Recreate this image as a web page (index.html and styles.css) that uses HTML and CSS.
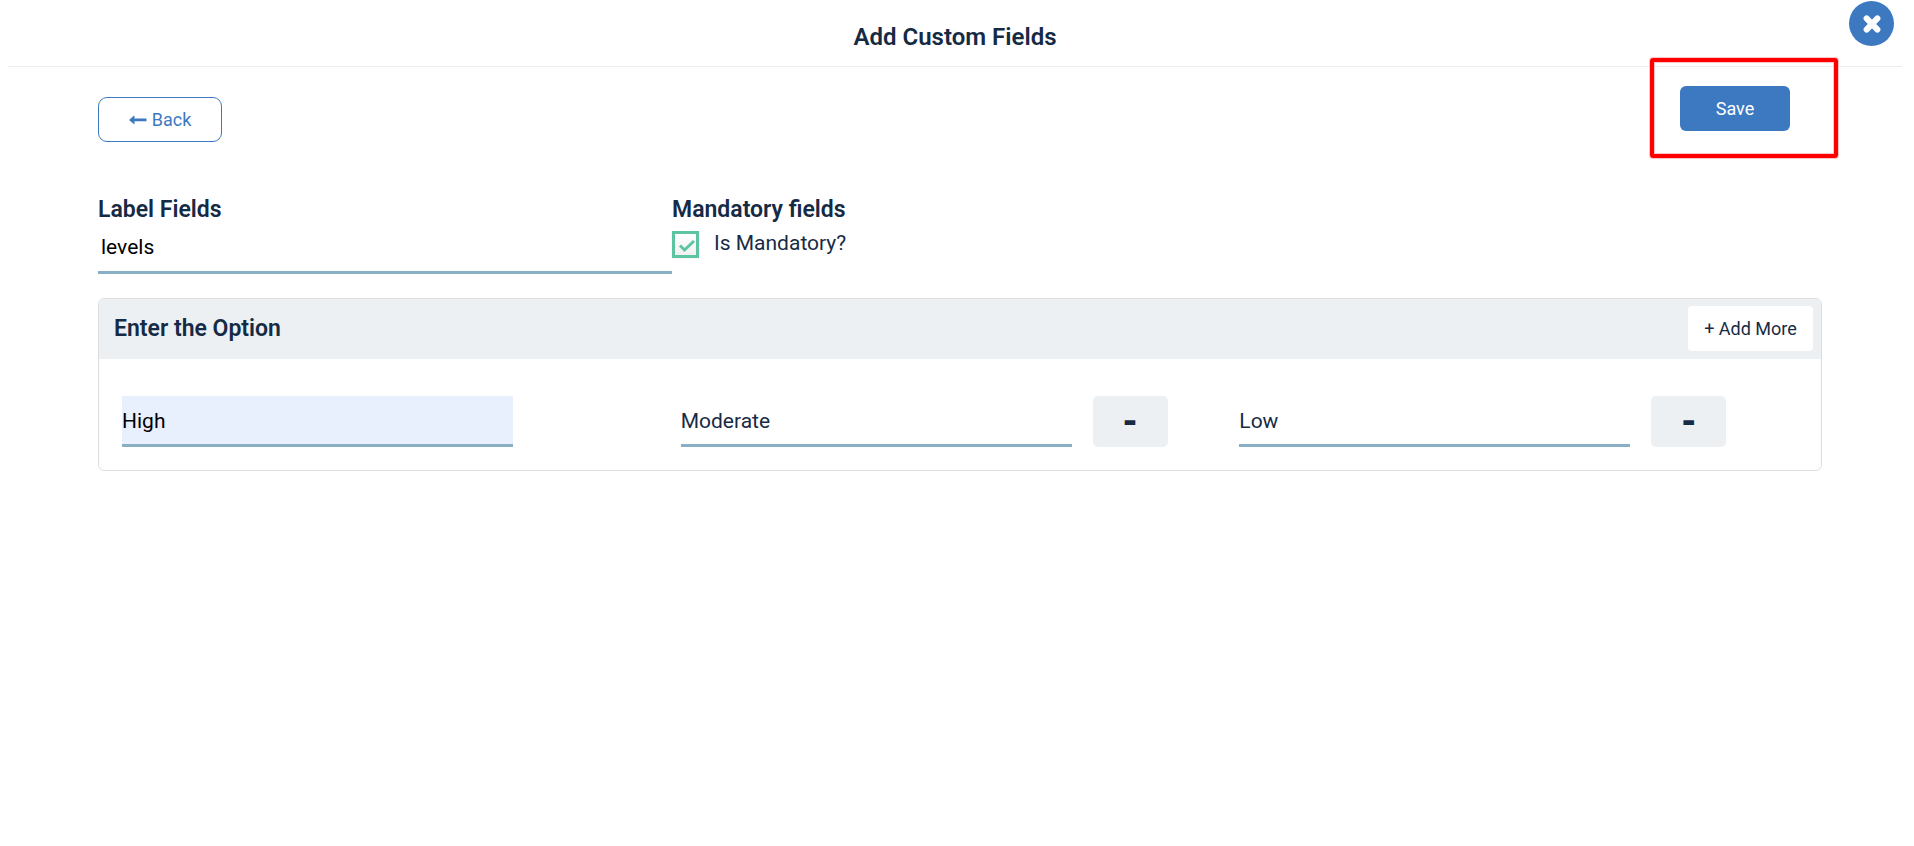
FILE: index.html
```html
<!DOCTYPE html>
<html lang="en">
<head>
<meta charset="utf-8">
<title>Add Custom Fields</title>
<link rel="stylesheet" href="styles.css">
</head>
<body>
<header class="dialog-header">
  <h1 class="dialog-title">Add Custom Fields</h1>
  <button class="close" type="button" aria-label="Close">
    <svg width="18" height="20" viewBox="0 0 18 20" fill="none" stroke="#fff" stroke-width="6" stroke-linecap="round"><path d="M3.6 4.4 14.400 15.600M14.400 4.400 3.600 15.600"/></svg>
  </button>
</header>
<main class="content">
  <div class="toolbar">
    <button class="btn btn-outline" type="button">
      <svg width="18" height="10" viewBox="0 0 18 10" fill="currentColor"><path d="M0 5 4.800 .8Q5.500 .4 5.500 1.200V3.500H17.500V6.300H5.500V8.800Q5.500 9.600 4.800 9.100Z"/></svg>
      Back
    </button>
    <div class="save-area">
      <button class="btn btn-primary" type="button">Save</button>
      <span class="highlight"></span>
    </div>
  </div>
  <form class="fields">
    <div class="field">
      <label class="heading" for="label-field">Label Fields</label>
      <input class="line-input label-input" id="label-field" type="text" value="levels">
    </div>
    <div class="field">
      <h2 class="heading">Mandatory fields</h2>
      <label class="check-label"><input class="check" type="checkbox" checked>Is Mandatory?</label>
    </div>
  </form>
  <section class="card">
    <div class="card-header">
      <h2 class="heading">Enter the Option</h2>
      <button class="btn btn-light" type="button">+ Add More</button>
    </div>
    <div class="options">
      <div class="option"><input class="line-input option-input filled" type="text" aria-label="Option 1" value="High"></div>
      <div class="option"><input class="line-input option-input" type="text" aria-label="Option 2" value="Moderate"><button class="remove" type="button" aria-label="Remove Moderate">-</button></div>
      <div class="option"><input class="line-input option-input" type="text" aria-label="Option 3" value="Low"><button class="remove" type="button" aria-label="Remove Low">-</button></div>
    </div>
  </section>
</main>
</body>
</html>
```

FILE: styles.css
```css
* { box-sizing: border-box; }

body {
  margin: 0;
  background: #fff;
  color: #172b45;
  font-family: Roboto, "Liberation Sans", sans-serif;
  font-size: 21px;
}

button, input { font-family: inherit; font-weight: inherit; color: inherit; }
button { cursor: pointer; }

.dialog-header {
  position: relative;
  margin: 0 12px 0 8px;
  padding: 21px 0 13px;
  border-bottom: 1px solid #e9edf1;
  text-align: center;
}

.dialog-title, .heading {
  display: block;
  margin: 0;
  color: #152a45;
  font-weight: 600;
}

.dialog-title { font-size: 24px; line-height: 32px; }
.heading { font-size: 23px; line-height: 32px; }

.close {
  position: absolute;
  top: 1px;
  right: 8px;
  display: grid;
  place-items: center;
  width: 45px;
  height: 45px;
  padding: 0;
  border: 0;
  border-radius: 50%;
  background: #3d79c1;
}

.content { padding: 19px 92px 0 98px; }

.toolbar {
  display: flex;
  justify-content: space-between;
  align-items: flex-start;
}

.btn {
  display: flex;
  align-items: center;
  justify-content: center;
  height: 45px;
  border: 1px solid transparent;
  border-radius: 6px;
  font-size: 18px;
}

.btn-outline {
  gap: 5px;
  width: 124px;
  margin-top: 11px;
  border-color: #3d79c1;
  border-radius: 9px;
  background: #fff;
  color: #3d79c1;
}

.btn-primary {
  width: 110px;
  background: #3d79c1;
  color: #fff;
}

.btn-light {
  width: 125px;
  border-radius: 4px;
  background: #fff;
}

.save-area { position: relative; margin-right: 32px; }

.highlight {
  position: absolute;
  inset: -28px -48px -27px -30px;
  border: 4px solid #f00;
  border-radius: 3px;
  box-shadow: 0 0 0 1px #ffc4c4, inset 0 0 0 1px #ffc4c4;
  pointer-events: none;
}

.fields {
  display: grid;
  grid-template-columns: repeat(3, 1fr);
  margin: 52px 2px 0 0;
}

.line-input {
  display: block;
  border: 0;
  border-bottom: 3px solid #88afc3;
  border-radius: 0;
  background: transparent;
  font-size: 21px;
  outline: 0;
}

.label-input {
  width: 100%;
  height: 48px;
  padding: 0 3px 3px;
  color: #000;
}

.check-label {
  display: flex;
  align-items: center;
  gap: 15px;
  margin-top: 3px;
  line-height: 27px;
}

.check {
  appearance: none;
  width: 27px;
  height: 27px;
  margin: 2px 0 0;
  border: 3px solid #5cc4a0;
  background: url("data:image/svg+xml,%3Csvg xmlns='http://www.w3.org/2000/svg' viewBox='0 0 21 21'%3E%3Cpath d='M5 11.500l4.500 4.500L19 7' fill='none' stroke='%235cc4a0' stroke-width='3'/%3E%3C/svg%3E") center / 21px, linear-gradient(#fff, #f1f1f1);
  box-shadow: 0 1px 2px #0000000d;
}

.card {
  margin-top: 24px;
  border: 1px solid #dcdee0;
  border-radius: 6px;
  overflow: hidden;
}

.card-header {
  display: flex;
  align-items: center;
  justify-content: space-between;
  padding: 7px 8px 8px 15px;
  background: #ecf0f3;
}

.options {
  display: grid;
  grid-template-columns: repeat(3, 1fr);
  padding: 37px 23px 23px;
}

.option { display: flex; gap: 21px; }

.option-input {
  width: 70%;
  height: 51px;
  padding: 2px 0 0;
}

.filled { background: #e8f0fe; color: #000; }

.remove {
  width: 75px;
  height: 51px;
  padding: 0;
  border: 0;
  border-radius: 5px;
  background: #ecf0f3;
  font-size: 36px;
  line-height: 48px;
  font-weight: 900;
}
```
